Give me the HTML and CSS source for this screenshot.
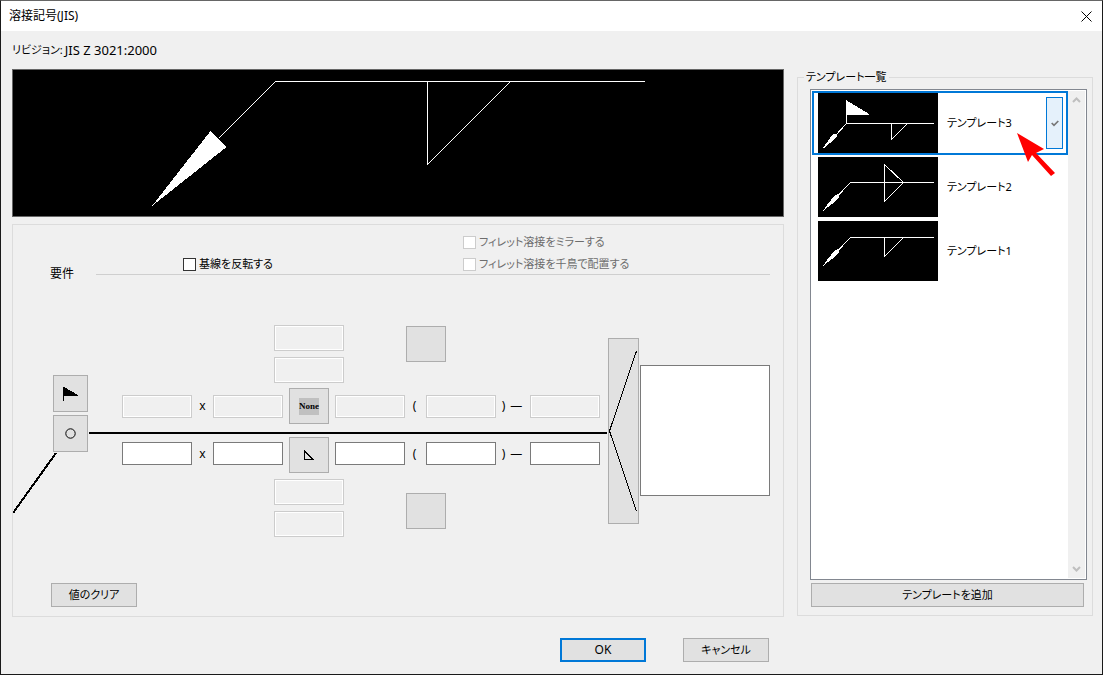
FILE: index.html
```
<!DOCTYPE html>
<html lang="ja">
<head>
<meta charset="utf-8">
<title>溶接記号(JIS)</title>
<link rel="stylesheet" href="styles.css">
</head>
<body>
<main class="window">
  <header class="titlebar">
    <h1 class="title">溶接記号(JIS)</h1>
    <button class="close" type="button" aria-label="閉じる">
      <svg width="11" height="11" viewBox="0 0 11 11"><path d="M.5 .5l10 10M10.5 .5l-10 10" stroke="#000" fill="none"/></svg>
    </button>
  </header>
  <p class="revision">リビジョン: <span class="standard">JIS Z 3021:2000</span></p>

  <div class="body">
    <div class="left">
      <div class="preview">
        <svg viewBox="0 0 770 146" shape-rendering="crispEdges">
          <path d="M205.500 68.500L262.500 11.500H632M414.500 11.500V94.500L497.500 11.500" stroke="#fff" fill="none"/>
          <path d="M139 136L197.500 61L213.500 77Z" fill="#fff"/>
        </svg>
      </div>

      <section class="panel">
        <div class="section-head">
          <h2 class="section-title">要件</h2>
          <div class="options">
            <label class="check mirror"><input type="checkbox" disabled>フィレット溶接をミラーする</label>
            <label class="check"><input type="checkbox">基線を反転する</label>
            <label class="check"><input type="checkbox" disabled>フィレット溶接を千鳥で配置する</label>
          </div>
        </div>

        <div class="diagram">
          <div class="leader">
            <button class="btn tool" type="button" aria-label="現場溶接"><svg width="15" height="14" viewBox="0 0 15 14" shape-rendering="crispEdges"><path d="M0 0h1l14 8v1H1v5H0z"/></svg></button>
            <button class="btn tool" type="button" aria-label="全周溶接"><svg width="11" height="11" viewBox="0 0 11 11"><circle cx="5.500" cy="5.500" r="4.700" fill="none" stroke="#000"/></svg></button>
            <svg class="leader-line" width="44" height="63" viewBox="0 0 44 63" shape-rendering="crispEdges"><path d="M43 1L0 61" stroke="#000" stroke-width="2"/></svg>
          </div>

          <div class="stack stack-top">
            <input class="field tall" type="text" aria-label="上側の値1" disabled>
            <input class="field tall" type="text" aria-label="上側の値2" disabled>
          </div>
          <button class="btn square square-top" type="button" aria-label="上側の表面形状"></button>

          <input class="field c4 upper" type="text" aria-label="上側の寸法1" disabled>
          <span class="mark c5 upper">x</span>
          <input class="field c6 upper" type="text" aria-label="上側の寸法2" disabled>
          <button class="btn square c7 upper" type="button"><span class="none">None</span></button>
          <input class="field c8 upper" type="text" aria-label="上側の長さ" disabled>
          <span class="mark c9 upper">(</span>
          <input class="field c10 upper" type="text" aria-label="上側の数" disabled>
          <span class="mark c11 upper"><span>)</span><span>—</span></span>
          <input class="field c12 upper" type="text" aria-label="上側のピッチ" disabled>

          <div class="baseline"></div>

          <input class="field c4 lower" type="text" aria-label="下側の寸法1">
          <span class="mark c5 lower">x</span>
          <input class="field c6 lower" type="text" aria-label="下側の寸法2">
          <button class="btn square c7 lower-tool" type="button" aria-label="すみ肉溶接"><svg width="12" height="11" viewBox="0 0 12 11" shape-rendering="crispEdges"><path d="M1.500 1V9.500H10Z" fill="none" stroke="#000"/></svg></button>
          <input class="field c8 lower" type="text" aria-label="下側の長さ">
          <span class="mark c9 lower">(</span>
          <input class="field c10 lower" type="text" aria-label="下側の数">
          <span class="mark c11 lower"><span>)</span><span>—</span></span>
          <input class="field c12 lower" type="text" aria-label="下側のピッチ">

          <div class="stack stack-bottom">
            <input class="field tall" type="text" aria-label="下側の値1" disabled>
            <input class="field tall" type="text" aria-label="下側の値2" disabled>
          </div>
          <button class="btn square square-bottom" type="button" aria-label="下側の表面形状"></button>

          <button class="btn fork" type="button" aria-label="尾"><svg width="29" height="162" viewBox="0 0 29 162" shape-rendering="crispEdges"><path d="M27.500 1L.5 81L27.500 161" fill="none" stroke="#000"/></svg></button>
          <textarea class="note" aria-label="尾の注記"></textarea>
        </div>

        <button class="btn action clear" type="button">値のクリア</button>
      </section>
    </div>

    <fieldset class="templates">
      <legend>テンプレート一覧</legend>
      <div class="listbox">
        <ul class="list">
          <li class="item selected">
            <svg class="thumb" viewBox="0 0 120 60" shape-rendering="crispEdges">
              <path d="M5.500 55.500L28.500 30.500H116M28.500 7V30M73.500 30.500V46.500L89.500 30.500" stroke="#fff" fill="none"/>
              <path d="M28 7L51 21V22H28ZM5 55L12 45L15 41H18L19 43L16 47Z" fill="#fff"/>
            </svg>
            <span class="name">テンプレート3</span>
            <button class="pick" type="button" aria-label="テンプレート3を適用"><svg width="8" height="7" viewBox="0 0 8 7"><path d="M.7 3L3 5.400L7.300 1" fill="none" stroke="#777" stroke-width="1.700"/></svg></button>
            <svg class="pointer" width="38" height="44" viewBox="0 0 38 44"><path d="M0 0L27 16L19 20L38 40L34 43L15 22L11 29Z" fill="#f00"/></svg>
          </li>
          <li class="item">
            <svg class="thumb" viewBox="0 0 120 60" shape-rendering="crispEdges">
              <path d="M5.500 53.500L32.500 25.500H116M66.500 7.500V44.500L85.500 25.500Z" stroke="#fff" fill="none"/>
              <path d="M5 54L9 48L17 38L20 37L21 38V41L14 47Z" fill="#fff"/>
            </svg>
            <span class="name">テンプレート2</span>
          </li>
          <li class="item">
            <svg class="thumb" viewBox="0 0 120 60" shape-rendering="crispEdges">
              <path d="M5.500 44.500L32.500 16.500H116M66.500 16.500V35.500L85.500 16.500" stroke="#fff" fill="none"/>
              <path d="M5 45L9 39L17 29L20 28L21 29V32L14 38Z" fill="#fff"/>
            </svg>
            <span class="name">テンプレート1</span>
          </li>
        </ul>
        <div class="scrollbar">
          <svg width="9" height="6" viewBox="0 0 9 6"><path d="M1 5L4.500 1.500L8 5" fill="none" stroke="#bfbfbf" stroke-width="2"/></svg>
          <svg width="9" height="6" viewBox="0 0 9 6"><path d="M1 1L4.500 4.500L8 1" fill="none" stroke="#bfbfbf" stroke-width="2"/></svg>
        </div>
      </div>
      <button class="btn add" type="button">テンプレートを追加</button>
    </fieldset>

    <footer class="footer">
      <button class="btn action primary" type="button">OK</button>
      <button class="btn action" type="button">キャンセル</button>
    </footer>
  </div>
</main>
</body>
</html>
```
FILE: styles.css
```
* { box-sizing: border-box; }

body {
  margin: 0;
  background: #f0f0f0;
  color: #000;
  font: 11px/16px "Noto Sans", "Noto Sans CJK JP", sans-serif;
  font-feature-settings: "palt";
}

button, input, textarea {
  margin: 0;
  font: inherit;
  color: inherit;
  font-feature-settings: inherit;
  border-radius: 0;
}

svg { display: block; }

.window {
  display: flex;
  flex-direction: column;
  min-height: 100vh;
  border: 1px solid #1a1a1a;
  border-top-color: #666;
}

.titlebar {
  display: flex;
  align-items: center;
  justify-content: space-between;
  height: 30px;
  padding: 0 10px 0 8px;
  background: #fff;
}
.title { margin: 0; font-size: 12px; font-weight: 400; }
.close { padding: 0; border: 0; background: none; }

.revision { display: flex; gap: 2px; margin: 0; padding: 11px; }
.standard { font-size: 13px; }

.body {
  flex: 1;
  display: grid;
  grid-template-columns: minmax(0, 1fr) 296px;
  grid-template-rows: 1fr auto;
  column-gap: 13px;
  padding: 0 9px 12px 11px;
}

.left { display: flex; flex-direction: column; gap: 7px; }
.preview { border: 1px solid #666; background: #000; }
.preview svg { width: 100%; }

.panel {
  flex: 1;
  display: flex;
  flex-direction: column;
  padding: 9px 13px 9px 0;
  border: 1px solid #dcdcdc;
}

.section-head { display: flex; align-items: flex-end; padding-left: 37px; }
.section-title { width: 46px; margin: 0; font-size: 12px; font-weight: 400; }
.options {
  flex: 1;
  display: grid;
  grid-template-columns: 280px 1fr;
  row-gap: 6px;
  margin-bottom: 7px;
  padding: 0 0 2px 87px;
  border-bottom: 1px solid #cfcfcf;
}
.mirror { grid-column: 2; }
.check { display: flex; align-items: center; gap: 3px; }
.check input {
  appearance: none;
  width: 13px;
  height: 13px;
  border: 1px solid #333;
  background: #fff;
}
.check input:disabled { border-color: #ccc; }
.check:has(input:disabled) { color: #6d6d6d; }

.btn {
  display: flex;
  align-items: center;
  justify-content: center;
  padding: 0;
  border: 1px solid #adadad;
  background: #e1e1e1;
}
.field {
  width: 100%;
  min-width: 0;
  height: 23px;
  padding: 1px 3px;
  border: 1px solid #7a7a7a;
  background: #fff;
}
.field:disabled {
  border-color: #ccc;
  background: #f0f0f0;
  box-shadow: inset 0 0 0 1px #fff;
}
.tall { width: 70px; height: 26px; }

.diagram {
  display: grid;
  grid-template-columns:
    40px 35px 34px minmax(0, 1fr) 21px minmax(0, 1fr) 52px minmax(0, 1fr)
    21px minmax(0, 1fr) 34px minmax(0, 1fr) 8px 31px 131px;
  grid-template-rows: 63px 36px 13px 36px 64px;
  margin-top: 43px;
}
.upper { grid-row: 2; align-self: center; }
.lower { grid-row: 4; align-self: center; margin-bottom: 3px; }
.lower-tool { grid-row: 4; }
.c4 { grid-column: 4; }
.c5 { grid-column: 5; }
.c6 { grid-column: 6; }
.c7 { grid-column: 7; justify-self: center; }
.c8 { grid-column: 8; }
.c9 { grid-column: 9; }
.c10 { grid-column: 10; }
.c11 { grid-column: 11; }
.c12 { grid-column: 12; }
.mark { display: flex; justify-content: center; gap: 5px; font-size: 12px; }
.mark.c9, .mark.c11 { padding-right: 2px; }

.square { width: 40px; height: 36px; }
.square-top { grid-area: 1 / 9 / 2 / 11; margin: 1px 0 0 1px; }
.square-bottom { grid-area: 5 / 9 / 6 / 11; align-self: end; margin: 0 0 8px 1px; }
.none {
  background: #c0c0c0;
  font: bold 9px/17px "Liberation Serif", serif;
}

.stack { display: flex; flex-direction: column; gap: 6px; justify-self: center; }
.stack-top { grid-area: 1 / 6 / 2 / 9; }
.stack-bottom { grid-area: 5 / 6 / 6 / 9; justify-content: flex-end; }

.leader {
  grid-area: 1 / 1 / 6 / 3;
  display: flex;
  flex-direction: column;
  align-items: flex-end;
  gap: 3px;
  padding-top: 50px;
}
.tool { width: 35px; height: 37px; }
.leader-line { align-self: flex-start; margin-top: -3px; }

.baseline {
  grid-area: 3 / 3 / 4 / 14;
  height: 2px;
  margin: 8px 1px 0;
  background: #000;
}

.fork { grid-area: 1 / 14 / 6 / 15; align-self: center; height: 186px; }
.note {
  grid-area: 1 / 15 / 6 / 16;
  align-self: center;
  width: 130px;
  height: 131px;
  margin: 0 0 2px 1px;
  border: 1px solid #7a7a7a;
  background: #fff;
  resize: none;
}

.action { width: 86px; height: 24px; }
.clear { margin: auto 0 0 38px; }
.primary { border: 2px solid #0078d7; font-size: 12px; }

.templates {
  display: flex;
  flex-direction: column;
  gap: 3px;
  min-width: 0;
  margin: 0 0 1px;
  padding: 4px 5px 8px 12px;
  border: 1px solid #dcdcdc;
}
.templates legend { margin-left: -6px; padding: 0 2px; }

.listbox {
  flex: 1;
  display: flex;
  padding: 1px;
  border: 1px solid #828790;
  background: #fff;
}
.list { flex: 1; margin: 0; padding: 0; list-style: none; }
.item {
  position: relative;
  display: flex;
  align-items: center;
  gap: 9px;
  height: 64px;
  padding-right: 3px;
  padding-left: 4px;
  border: 2px solid transparent;
}
.selected { border-color: #0078d7; }
.thumb { width: 120px; height: 60px; background: #000; }
.name { flex: 1; }
.pick {
  display: flex;
  align-items: center;
  justify-content: center;
  width: 17px;
  height: 52px;
  padding: 0;
  border: 1px solid #0078d7;
  background: #e5f1fb;
}
.pointer { position: absolute; top: 40px; right: 11px; }

.scrollbar {
  display: flex;
  flex-direction: column;
  align-items: center;
  justify-content: space-between;
  width: 17px;
  padding: 6px 0;
  background: #f0f0f0;
}
.add { height: 24px; margin: 0 3px 0 1px; }

.footer {
  display: flex;
  justify-content: flex-end;
  gap: 37px;
  padding: 21px 15px 0 0;
}
```
